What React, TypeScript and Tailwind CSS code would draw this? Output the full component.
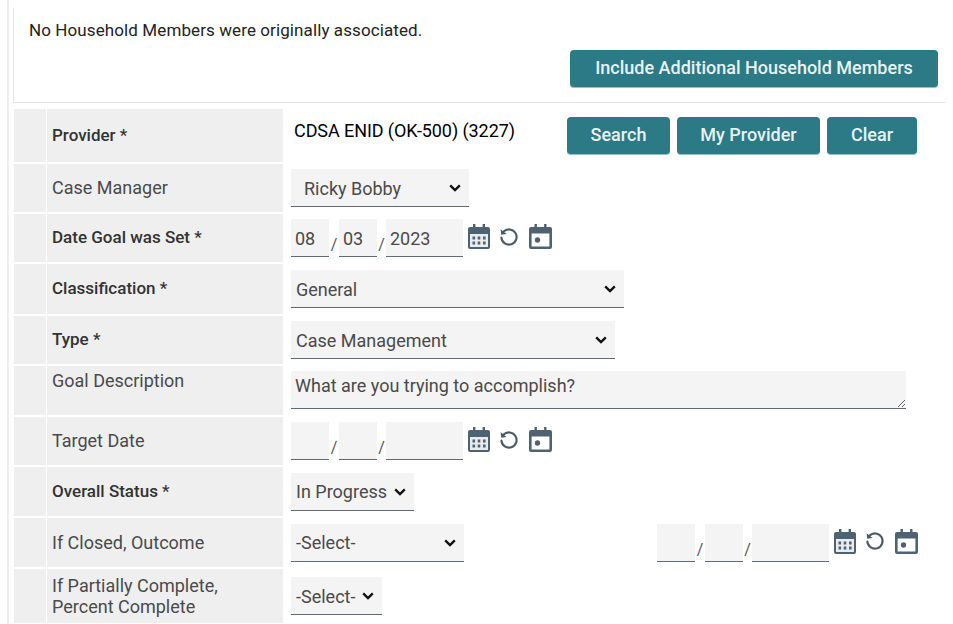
import React from 'react';

const LABEL = "flex-none w-[236px] bg-[#efefef] pl-[5px] text-[18px] text-[#4a4a4a]";
const FIELD = "bg-[#f4f4f4] border-0 border-b border-[#5f6b76] text-[18px] text-[#4a4a4a] outline-none h-[38px] pt-[1px]";
const BTN = "h-[38px] rounded-[4px] bg-[#2b7a85] border-b border-[#8cc4ca] text-[#e8f2f3] text-[18px] font-medium text-center pb-[3px]";

function CalendarGrid() {
  return (
    <svg width="22" height="25" viewBox="0 0 22 25" className="flex-none">
      <path d="M5 0h2.4v3h7.2V0H17v3h3a2 2 0 0 1 2 2v18a2 2 0 0 1-2 2H2a2 2 0 0 1-2-2V5a2 2 0 0 1 2-2h3z" fill="#4f6272" />
      <rect x="2" y="10" width="18" height="13" fill="#e8ecef" />
      {[4.5, 9.7, 15].map((x) =>
        [12.5, 17.5].map((y) => <rect key={x + '-' + y} x={x} y={y} width="2.6" height="3" fill="#4f6272" />)
      )}
    </svg>
  );
}

function Reset() {
  return (
    <svg width="20" height="20" viewBox="0 0 20 20" fill="none" className="flex-none">
      <path d="M4.6 4.6A7.6 7.6 0 1 1 2.4 10.6" stroke="#4d5a64" strokeWidth="2.1" strokeLinecap="round" />
      <path d="M1.6 2.2l.6 5.6 5.4-.9z" fill="#4d5a64" />
    </svg>
  );
}

function CalendarToday() {
  return (
    <svg width="23" height="25" viewBox="0 0 23 25" className="flex-none">
      <path d="M5.5 0h2.4v3h7.2V0h2.4v3h3.5a2 2 0 0 1 2 2v18a2 2 0 0 1-2 2H2a2 2 0 0 1-2-2V5a2 2 0 0 1 2-2h3.5z" fill="#4f6272" />
      <rect x="2.6" y="9.5" width="17.8" height="13" fill="#fff" />
      <circle cx="8.5" cy="16" r="2.7" fill="#4f6272" />
    </svg>
  );
}

function DateInput({ m = '', d = '', y = '' }: { m?: string; d?: string; y?: string }) {
  return (
    <div className="flex items-start h-[38px]">
      <input readOnly value={m} className={FIELD + " w-[38px] pl-[4px]"} />
      <span className="w-[10px] mt-[16px] text-[16px] leading-[20px] text-[#555] text-center">/</span>
      <input readOnly value={d} className={FIELD + " w-[38px] pl-[4px]"} />
      <span className="w-[9px] mt-[16px] text-[16px] leading-[20px] text-[#555] text-center">/</span>
      <input readOnly value={y} className={FIELD + " w-[77px] pl-[4px]"} />
      <div className="flex items-center ml-[5px] mt-[5px]">
        <CalendarGrid />
        <div className="ml-[9px]">
          <Reset />
        </div>
        <div className="ml-[10px]">
          <CalendarToday />
        </div>
      </div>
    </div>
  );
}

function Select({ value, width, pad = "pl-[5px]" }: { value: string; width: string; pad?: string }) {
  return (
    <div className={"relative " + width}>
      <select className={FIELD + " w-full appearance-none " + pad} defaultValue={value}>
        <option>{value}</option>
      </select>
      <svg width="12" height="8" viewBox="0 0 12 8" fill="none" className="absolute right-[8px] top-[15px]">
        <path d="M1.2 1.4L6 6l4.8-4.6" stroke="#111" strokeWidth="2.4" />
      </svg>
    </div>
  );
}

function Row({ label, required, height, top, children, align = 'items-center' }: {
  label: React.ReactNode; required?: boolean; height: string; top?: string; children: React.ReactNode; align?: string;
}) {
  return (
    <div className={"flex " + height}>
      <div className="flex-none w-[32px] mr-[1px] bg-[#efefef]" />
      <div className={LABEL + " flex " + (top ? top : "items-center")}>
        {required ? (
          <span className="text-[17px] font-medium text-[#333]">{label} *</span>
        ) : (
          <span className="leading-[21px] pb-[1px]">{label}</span>
        )}
      </div>
      <div className={"flex flex-1 pl-[8px] " + align}>{children}</div>
    </div>
  );
}

export default function App() {
  return (
    <div className="h-[624px] w-[953px] overflow-hidden bg-white pl-[7px] font-['Roboto',sans-serif]">
      <div className="h-full w-[938px] border-l-2 border-[#eeeeee] pl-[4px] pt-[8px]">
        <div className="h-[95px] border-l border-b border-[#e4e4e4] pl-[15px] pt-[12px]">
          <p className="text-[17px] leading-[20px] tracking-[0.1px] text-[#222]">No Household Members were originally associated.</p>
          <div className="flex justify-end mt-[10px]">
            <button className={BTN + " w-[368px] mr-[7px]"}>Include Additional Household Members</button>
          </div>
        </div>

        <div className="mt-[6px] flex flex-col gap-[2px] pl-[1px]">
          <Row label="Provider" required height="h-[53px]">
            <div className="flex items-start h-full">
              <span className="w-[276px] pl-[3px] pt-[10px] text-[18px] leading-[24px] tracking-[-0.08px] text-black">CDSA ENID (OK-500) (3227)</span>
              <div className="flex gap-[7px] pt-[8px]">
                <button className={BTN + " w-[103px]"}>Search</button>
                <button className={BTN + " w-[143px]"}>My Provider</button>
                <button className={BTN + " w-[90px]"}>Clear</button>
              </div>
            </div>
          </Row>
          <Row label="Case Manager" height="h-[48px]">
            <Select value="Ricky Bobby" width="w-[178px]" pad="pl-[13px]" />
          </Row>
          <Row label="Date Goal was Set" required height="h-[48px]">
            <DateInput m="08" d="03" y="2023" />
          </Row>
          <Row label="Classification" required height="h-[50px]">
            <Select value="General" width="w-[333px]" />
          </Row>
          <Row label="Type" required height="h-[48px]">
            <Select value="Case Management" width="w-[324px]" />
          </Row>
          <Row label="Goal Description" height="h-[49px]" top="items-start pt-[4px]" align="items-start pt-[5px]">
            <textarea
              readOnly
              value="What are you trying to accomplish?"
              className={FIELD + " w-[615px] resize-y px-[4px] pt-[3px] leading-[24px]"}
            />
          </Row>
          <Row label="Target Date" height="h-[48px]">
            <DateInput />
          </Row>
          <Row label="Overall Status" required height="h-[49px]">
            <Select value="In Progress" width="w-[123px]" />
          </Row>
          <Row label="If Closed, Outcome" height="h-[49px]">
            <div className="flex items-center w-full">
              <Select value="-Select-" width="w-[173px]" />
              <div className="ml-[193px]">
                <DateInput />
              </div>
            </div>
          </Row>
          <Row label={<>If Partially Complete,<br />Percent Complete</>} height="h-[54px]">
            <Select value="-Select-" width="w-[91px]" />
          </Row>
        </div>
      </div>
    </div>
  );
}
